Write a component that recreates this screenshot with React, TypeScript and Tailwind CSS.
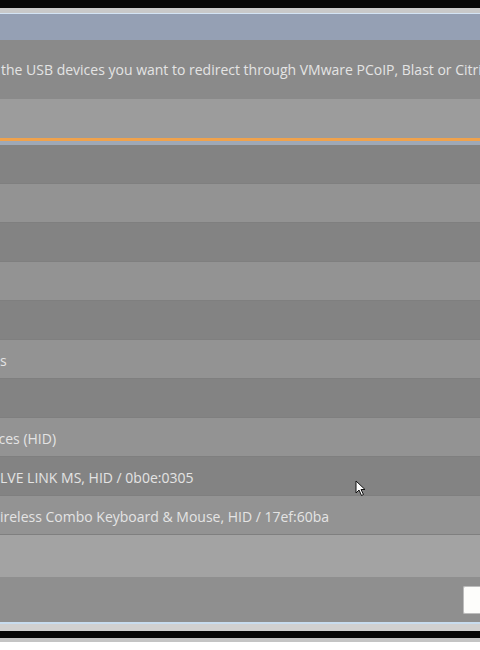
import React from "react";

const rows = [
  { text: "", light: false },
  { text: "", light: true },
  { text: "", light: false },
  { text: "", light: true },
  { text: "", light: false },
  { text: "s", light: true },
  { text: "", light: false },
  { text: "ices (HID)", light: true, shift: true },
  { text: "LVE LINK MS, HID / 0b0e:0305", light: false },
  { text: "ireless Combo Keyboard & Mouse, HID / 17ef:60ba", light: true },
];

const App = () => {
  return (
    <div
      className="relative w-[480px] h-[650px] overflow-hidden bg-white flex flex-col"
      style={{ fontFamily: '"Open Sans", "Noto Sans", sans-serif' }}
    >
      {/* window frame top */}
      <div className="h-[8px] bg-[#060606]" />
      <div className="h-[5px] bg-[#c9c9c9]" />
      <div className="h-[1px] bg-[#d4e4f4]" />
      {/* title bar */}
      <div className="h-[26px] bg-[#95a0b4]" />

      {/* description */}
      <div className="h-[59px] bg-[#8a8a8a] flex items-center overflow-hidden whitespace-nowrap">
        <span className="text-[14px] text-[#e4e4e4] pl-[1px]">
          the USB devices you want to redirect through VMware PCoIP, Blast or Citrix
        </span>
      </div>

      {/* header band */}
      <div className="h-[39px] bg-[#9c9c9c]" />
      <div className="h-[3px] bg-[#f0a24c]" />
      <div className="h-[4px] bg-[#9ea8b6]" />

      {/* device list */}
      <div className="flex flex-col">
        {rows.map((row, i) => (
          <div
            key={i}
            className={`h-[39px] flex items-center pt-[3px] overflow-hidden whitespace-nowrap border-b border-[#7f7f7f] ${
              row.light ? "bg-[#939393]" : "bg-[#838383]"
            }`}
          >
            <span
              className={`text-[14px] text-[#e4e4e4] ${row.shift ? "-ml-[5px]" : ""}`}
            >
              {row.text}
            </span>
          </div>
        ))}
      </div>
      <div className="h-[42px] bg-[#a3a3a3]" />

      {/* footer */}
      <div className="h-[45px] bg-[#8f8f8f] flex items-center justify-end">
        <div className="h-[28px] w-[17px] bg-[#fdfdfb] rounded-l-[2px] border border-r-0 border-[#bdbdbd]" />
      </div>

      {/* window frame bottom */}
      <div className="h-[2px] bg-[#c8dcee]" />
      <div className="h-[7px] bg-[#d0d0d0]" />
      <div className="h-[7px] bg-[#060606]" />
      <div className="h-[4px] bg-[#c4c4c4]" />
      <div className="flex-1 bg-white" />

      {/* mouse pointer over list */}
      <svg
        className="absolute left-[355px] top-[480px]"
        width="12"
        height="17"
        viewBox="0 0 12 17"
      >
        <path
          d="M1 1 L1 13 L4 10 L6.5 15.5 L8.5 14.5 L6 9.5 L10 9.5 Z"
          fill="#ffffff"
          stroke="#111111"
          strokeWidth="1"
          strokeLinejoin="round"
        />
      </svg>
    </div>
  );
};

export default App;
